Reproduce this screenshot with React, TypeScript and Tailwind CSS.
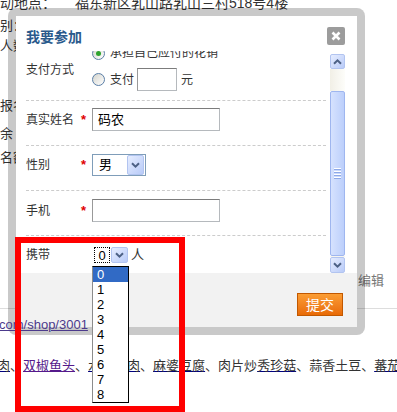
import React from 'react';

// XP style little chevron used by the select and the scrollbar buttons
const Chevron = ({ up = false }: { up?: boolean }) => (
  <svg width="9" height="6" viewBox="0 0 9 6" className={up ? 'rotate-180' : ''}>
    <path d="M1 1.2 L4.5 4.6 L8 1.2" fill="none" stroke="#4d6185" strokeWidth="2" />
  </svg>
);

const XpButton = ({ up, className }: { up?: boolean; className: string }) => (
  <div
    className={`flex items-center justify-center rounded-[2px] border border-[#b2c4f0] bg-linear-to-br from-[#e6edff] to-[#b9cbf8] ${className}`}
  >
    <Chevron up={up} />
  </div>
);

const Radio = ({ checked = false }: { checked?: boolean }) => (
  <span className="flex h-[13px] w-[13px] shrink-0 items-center justify-center rounded-full border border-[#5a7ea6] bg-linear-to-br from-[#d4d4cd] to-white">
    {checked && <span className="h-[5px] w-[5px] rounded-full bg-[#2ea32e]" />}
  </span>
);

const Label = ({ text, required = false }: { text: string; required?: boolean }) => (
  <>
    <span className="w-[55px] shrink-0">{text}</span>
    <span className="w-[11px] shrink-0 text-[13px] font-bold text-[#e00000]">{required ? '*' : ''}</span>
  </>
);

const Dashed = () => <div className="h-px border-t border-dashed border-[#cccccc]" />;

const TextInput = ({ value = '' }: { value?: string }) => (
  <div className="flex h-[23px] w-[128px] items-center border border-[#b5b9bd] border-t-[#7c7c7c] border-l-[#999999] bg-white pl-[5px] text-[13px] text-black">
    {value}
  </div>
);

function Scrollbar() {
  return (
    <div className="mr-[12px] mt-[3px] flex w-[15px] flex-col">
      <XpButton up className="h-[15px] w-[15px]" />
      <div className="h-[22px] bg-linear-to-r from-[#f1efe6] to-[#fdfdfa]" />
      <div className="flex h-[165px] flex-col items-center justify-center gap-[1px] rounded-[2px] border border-[#9fb6ef] bg-linear-to-r from-[#d6e2fe] to-[#bccffb]">
        {[0, 1, 2, 3].map(i => (
          <div key={i} className="mb-[1px] h-px w-[7px] bg-white shadow-[0_1px_0_#8ea9e8]" />
        ))}
      </div>
      <div className="h-px bg-[#f6f5ef]" />
      <XpButton className="h-[16px] w-[15px]" />
    </div>
  );
}

export default function App() {
  return (
    <div className="relative h-[412px] w-[397px] overflow-hidden bg-white font-['Liberation_Sans','Noto_Sans_CJK_SC',sans-serif] text-[#333333]">
      {/* page behind the dialog */}
      <div className="whitespace-nowrap text-[13px] leading-[16px]">
        <div className="-mt-[5px] flex h-[23px] text-[14px]">
          <span className="-ml-[14px] w-[89px] shrink-0">活动地点：</span>
          <span>福东新区乳山路乳山三村518号4楼</span>
        </div>
        <div className="-ml-[13px] h-[20px]">性别：</div>
        <div className="h-[60px]">人数</div>
        <div className="h-[28px]">报名</div>
        <div className="-ml-[13px] h-[24px]">剩余</div>
        <div className="h-[123px]">名额</div>
        <div className="h-[35px] pl-[358px] text-[#777777]">编辑</div>
        <div className="h-px bg-[#dddddd]" />
        <div className="h-[8px]" />
        <div className="relative z-10 h-[41px]">
          <a className="-ml-[1px] text-[#4c3a8c] underline">com/shop/3001</a>
        </div>
        <div className="-ml-[3px] h-[16px]">
          <a className="underline decoration-[#00007f]">肉</a>、
          <a className="text-[#551a8b] underline">双椒鱼头</a>、
          <a className="underline decoration-[#00007f]">水煮牛肉</a>、
          <a className="underline decoration-[#00007f]">麻婆豆腐</a>、肉片炒
          <a className="underline decoration-[#00007f]">秀珍菇</a>、蒜香土豆、
          <a className="underline decoration-[#00007f]">蕃茄炒蛋</a>
        </div>
      </div>

      {/* dialog */}
      <div className="absolute left-[8px] top-[8px] h-[327px] w-[357px] rounded-[8px] bg-black/[0.21] p-[8px]">
        <div className="flex h-full flex-col bg-white">
          <div className="flex h-[35px] items-start justify-between">
            <h2 className="pl-[10px] pt-[13px] text-[14px] font-bold leading-[16px] text-[#2a5a8c]">我要参加</h2>
            <button className="mr-[12px] mt-[11px] flex h-[18px] w-[18px] items-center justify-center rounded-[2px] bg-[#9c9c9c]">
              <svg width="10" height="10" viewBox="0 0 10 10">
                <path d="M1.5 1.5 L8.5 8.5 M8.5 1.5 L1.5 8.5" stroke="white" strokeWidth="2.6" />
              </svg>
            </button>
          </div>

          <div className="flex h-[222px]">
            <div className="flex-1 overflow-hidden pl-[10px] pr-[4px] text-[12px] leading-[16px] text-[#333333]">
              <div className="-mt-[21px]">
                {/* payment */}
                <div className="flex pb-[9px] pt-[12px]">
                  <span className="w-[55px] shrink-0 pt-[20px]">支付方式</span>
                  <span className="w-[11px] shrink-0" />
                  <div className="flex flex-col gap-[4px]">
                    <div className="flex h-[22px] items-center gap-[5px]">
                      <Radio checked />
                      <span>承担自己应付的花销</span>
                    </div>
                    <div className="flex h-[23px] items-center">
                      <Radio />
                      <span className="ml-[5px]">支付</span>
                      <div className="ml-[3px] h-[23px] w-[40px] border border-[#b5b9bd] border-t-[#7c7c7c] border-l-[#999999]" />
                      <span className="ml-[4px]">元</span>
                    </div>
                  </div>
                </div>
                <Dashed />
                <div className="flex items-center pb-[14px] pt-[7px]">
                  <Label text="真实姓名" required />
                  <TextInput value="码农" />
                </div>
                <Dashed />
                <div className="flex items-center pb-[14px] pt-[8px]">
                  <Label text="性别" required />
                  <div className="flex h-[22px] w-[54px] items-center border border-[#7f9db9] bg-white p-px">
                    <span className="pl-[5px] text-[13px] text-black">男</span>
                    <XpButton className="ml-auto h-[20px] w-[17px]" />
                  </div>
                </div>
                <Dashed />
                <div className="flex items-center pb-[13px] pt-[8px]">
                  <Label text="手机" required />
                  <TextInput />
                </div>
                <Dashed />
                <div className="flex items-center pt-[10px]">
                  <Label text="携带" />
                  <div className="flex h-[18px] w-[36px] items-center bg-white">
                    <span className="ml-[2px] flex h-[16px] w-[16px] items-center justify-center border border-dotted border-black text-[13px] leading-none text-black">
                      0
                    </span>
                    <XpButton className="ml-auto h-[16px] w-[17px]" />
                  </div>
                  <span className="ml-[3px] text-[13px]">人</span>
                </div>
              </div>
            </div>
            <Scrollbar />
          </div>

          <div className="flex flex-1 items-start justify-end bg-[#f2f2f2] pr-[14px] pt-[20px]">
            <button className="h-[23px] w-[46px] border border-[#c25800] bg-linear-to-b from-[#fb9d33] to-[#e86a05] text-[14px] leading-[20px] text-white">
              提交
            </button>
          </div>
        </div>
      </div>

      {/* open select list */}
      <ul className="absolute left-[92px] top-[266px] z-20 w-[37px] border border-black border-l-[#8c8c8c] bg-white text-[13px] leading-[15px] text-black">
        {['0', '1', '2', '3', '4', '5', '6', '7', '8'].map((n, i) => (
          <li key={n} className={`h-[15px] pl-[4px] ${i === 0 ? 'bg-[#316ac5] text-white' : ''}`}>
            {n}
          </li>
        ))}
      </ul>

      {/* red annotation box */}
      <div className="absolute left-[15px] top-[237px] z-30 h-[175px] w-[170px] border-[6px] border-[#ff0000]" />
    </div>
  );
}
